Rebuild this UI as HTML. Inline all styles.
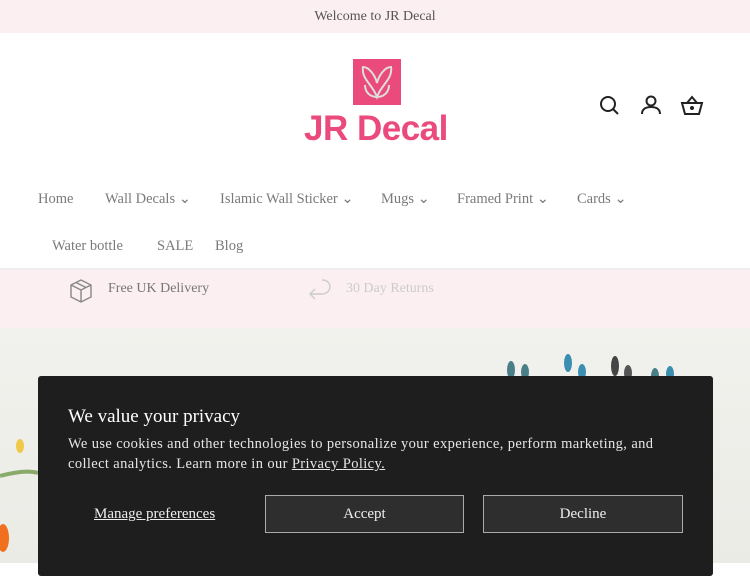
<!DOCTYPE html>
<html><head><meta charset="utf-8"><style>
*{margin:0;padding:0;box-sizing:border-box}
body{width:750px;height:563px;overflow:hidden;background:#fff;font-family:"Liberation Serif",serif;color:#6e6e6e;position:relative}
.ann{height:33px;background:#fbeff1;text-align:center;font-size:14px;line-height:33px;color:#555}
.nav{position:absolute;font-size:14.5px;color:#7a7a7a}
.nav span{position:absolute;white-space:nowrap}
.hdrline{position:absolute;top:268px;left:0;width:750px;height:2px;background:#eee}
.feat{position:absolute;top:270px;left:0;width:750px;height:58px;background:#fbeff1}
.hero{position:absolute;top:328px;left:0;width:750px;height:235px;background:linear-gradient(#f1f1ed,#ebebe6)}
.modal{position:absolute;left:38px;top:376px;width:675px;height:200px;background:#1e1e1e;border-radius:3px;color:#eee}
.modal h2{position:absolute;left:30px;top:30px;font-size:19px;font-weight:normal;color:#fff}
.modal p{position:absolute;left:30px;top:58px;width:600px;font-size:14.5px;letter-spacing:0.38px;line-height:20px;color:#e6e6e6}
.btn{position:absolute;top:119px;height:38px;border:1px solid #aaa;background:#2e2e2e;color:#eee;font-size:15px;text-align:center;line-height:36px}
</style></head><body>
<div class="ann">Welcome to JR Decal</div>
<svg style="position:absolute;left:353px;top:59px" width="48" height="46" viewBox="0 0 48 46"><rect width="48" height="46" fill="#ea4a7c"/><path d="M24 38C20 26 8 20 10 8c6 0 12 8 14 16 2-8 8-16 14-16 2 12-10 18-14 30z M12 26c0 8 6 12 12 12 6 0 12-4 12-12" fill="none" stroke="#ddd" stroke-width="2"/></svg>
<div style="position:absolute;left:304px;top:109px;font-family:'Liberation Sans',sans-serif;font-size:35px;line-height:40px;color:#ea4a7c;letter-spacing:-0.5px;font-weight:bold">JR Decal</div>
<svg style="position:absolute;left:598px;top:94px" width="110" height="24" viewBox="0 0 110 24" fill="none" stroke="#222" stroke-width="2"><circle cx="10" cy="10" r="7"/><path d="M15 15l5 5"/><circle cx="53" cy="7" r="4.5"/><path d="M44 20c0-5 4-7 9-7s9 2 9 7"/><path d="M84 9h20l-3 11H87z M89 9l5-6 5 6"/><circle cx="94" cy="14" r="1" fill="#222"/></svg>
<div class="nav" style="top:191px;left:0;width:750px;height:80px">
<span style="left:38px">Home</span>
<span style="left:105px">Wall Decals ⌄</span>
<span style="left:220px">Islamic Wall Sticker ⌄</span>
<span style="left:381px">Mugs ⌄</span>
<span style="left:457px">Framed Print ⌄</span>
<span style="left:577px">Cards ⌄</span>
<span style="left:52px;top:47px">Water bottle</span>
<span style="left:157px;top:47px">SALE</span>
<span style="left:215px;top:47px">Blog</span>
</div>
<div class="hdrline"></div>
<div class="feat">
<svg style="position:absolute;left:69px;top:8px" width="24" height="26" viewBox="0 0 24 26" fill="none" stroke="#888" stroke-width="1.4"><path d="M2 7l10-5 10 5v12l-10 5-10-5z M2 7l10 5 10-5 M12 12v12 M7 4.5l10 5"/></svg>
<span style="position:absolute;left:108px;top:11px;font-size:14px;color:#777">Free UK Delivery</span>
<svg style="position:absolute;left:306px;top:8px" width="28" height="26" viewBox="0 0 28 26" fill="none" stroke="#ccc" stroke-width="1.4"><path d="M16 2c6 0 8 4 8 7s-3 7-8 7H4 M9 11l-5 5 5 5"/></svg>
<span style="position:absolute;left:346px;top:11px;font-size:14px;color:#ccc">30 Day Returns</span>
</div>
<div class="hero">
<svg width="750" height="235" style="position:absolute;left:0;top:0"><g fill="#4a7f8a"><ellipse cx="511" cy="42" rx="4" ry="9"/><ellipse cx="525" cy="44" rx="4" ry="8"/><ellipse cx="568" cy="35" rx="4" ry="9" fill="#3a8fb0"/><ellipse cx="582" cy="44" rx="4" ry="8" fill="#3a8fb0"/><ellipse cx="615" cy="38" rx="4" ry="10" fill="#444"/><ellipse cx="628" cy="45" rx="4" ry="8" fill="#555"/><ellipse cx="655" cy="48" rx="4" ry="8"/><ellipse cx="670" cy="46" rx="4" ry="8" fill="#3a8fb0"/></g><path d="M0 148c15-4 28-6 38-3" stroke="#8aaa6a" stroke-width="4" fill="none"/><ellipse cx="20" cy="118" rx="4" ry="7" fill="#f0c84a"/><ellipse cx="3" cy="210" rx="6" ry="14" fill="#f07020"/></svg>
</div>
<div class="modal">
<h2>We value your privacy</h2>
<p>We use cookies and other technologies to personalize your experience, perform marketing, and collect analytics. Learn more in our <u>Privacy Policy.</u></p>
<span style="position:absolute;left:56px;top:130px;font-size:15px;text-decoration:underline;color:#eee">Manage preferences</span>
<div class="btn" style="left:227px;width:199px">Accept</div>
<div class="btn" style="left:445px;width:200px">Decline</div>
</div>
</body></html>
